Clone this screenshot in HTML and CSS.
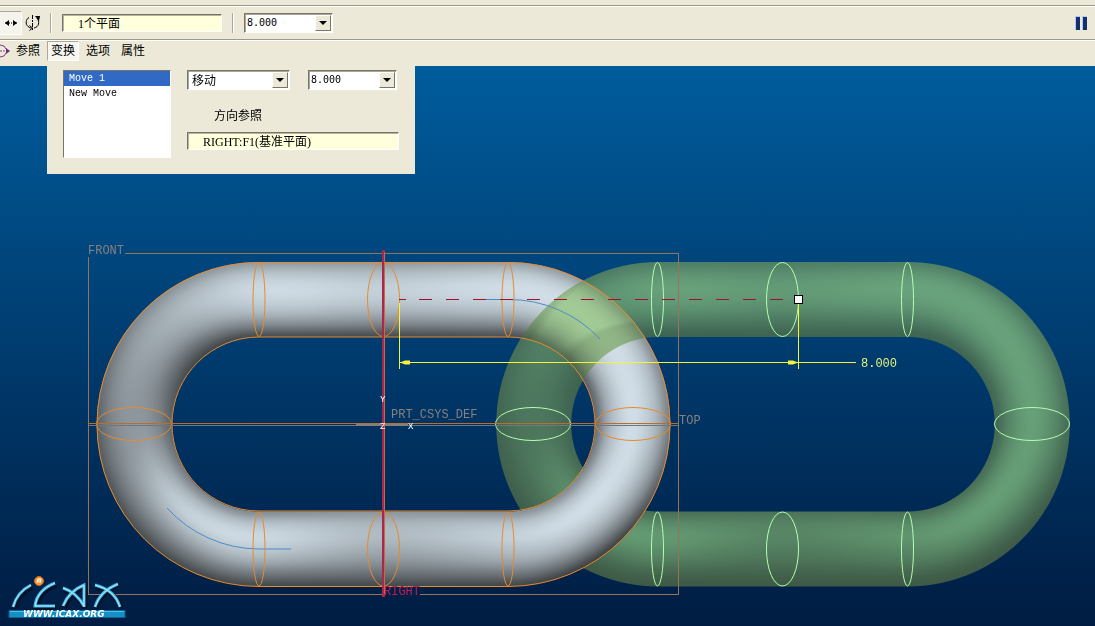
FILE: index.html
```html
<!DOCTYPE html>
<html lang="zh-CN">
<head>
<meta charset="utf-8">
<title>变换</title>
<link rel="stylesheet" href="styles.css">
</head>
<body>
<div class="strip"></div>
<header class="toolbar">
  <button class="tool tool-on" type="button" aria-label="移动">
    <svg width="14" height="8" viewBox="0 0 14 8"><path d="M1 4h12" stroke="#000" stroke-dasharray="5 1 1 1 5"/><path d="M1 4l4-3v6zM13 4l-4-3v6z"/></svg>
  </button>
  <button class="tool" type="button" aria-label="旋转">
    <svg width="16" height="18" viewBox="0 0 16 18" fill="none" stroke="#000"><path d="M7.500 1v16" stroke-dasharray="4 1 2 1"/><path d="M4 3.500C1 5 0 10 3 12.500q2 1.500 3 1.500M9 14c5-1 6-6 3-10"/><path d="M10 2h5l-1 5z" fill="#000" stroke="none"/><path d="M4.500 11.500l3 2.500-3 2.500"/></svg>
  </button>
  <span class="sep"></span>
  <input class="collector plane" type="text" value="1个平面" aria-label="平面">
  <span class="sep"></span>
  <span class="combo main-value">
    <select aria-label="距离"><option>8.000</option></select>
    <span class="drop"><svg width="8" height="4" viewBox="0 0 8 4"><path d="M0 0h8L4 4z"/></svg></span>
  </span>
  <button class="pause" type="button" aria-label="暂停">
    <svg width="14" height="14" viewBox="0 0 14 14"><path fill="#b9c6ef" d="M0 0h5v14H0zM7 0h5v14H7z"/><path fill="#122f70" d="M1 1h4v13H1zM8 1h4v13H8z"/></svg>
  </button>
</header>
<nav class="menubar">
  <svg class="ref-icon" width="10" height="14" viewBox="0 0 10 14" fill="none" stroke="#7a3a8c"><path d="M0 1q5 0 6 4M0 13q5 0 6-4"/><path d="M0 7h6" stroke-dasharray="2 1"/><path d="M6 4l4 3-4 3z" fill="#6a2a7c" stroke="none"/></svg>
  <button type="button">参照</button>
  <button type="button" class="open">变换</button>
  <button type="button">选项</button>
  <button type="button">属性</button>
</nav>
<main class="stage">
  <canvas class="layer" id="solid" width="1095" height="560"></canvas>
  <svg class="layer" viewBox="0 66 1095 560" fill="none">
    <g stroke="#4a8cc8">
      <path d="M486 299.500H508A125 125 0 0 1 600 339M167 508A125 125 0 0 0 259 549H291"/>
    </g>
    <g stroke="#e88a2c">
      <rect x="97" y="262.500" width="573" height="324" rx="162"/>
      <rect x="172" y="337" width="423" height="174" rx="87"/>
      <ellipse cx="259" cy="299.500" rx="6" ry="37"/><ellipse cx="383.500" cy="299.500" rx="16" ry="37"/><ellipse cx="508" cy="299.500" rx="6" ry="37"/>
      <ellipse cx="259" cy="549" rx="6" ry="37"/><ellipse cx="383.500" cy="549" rx="16" ry="37"/><ellipse cx="508" cy="549" rx="6" ry="37"/>
      <ellipse cx="134" cy="424" rx="37.500" ry="16.500"/><ellipse cx="633" cy="424" rx="37.500" ry="16.500"/>
    </g>
    <g stroke="#b4ffb0">
      <ellipse cx="657.500" cy="299.500" rx="6" ry="37"/><ellipse cx="782.500" cy="299.500" rx="16" ry="37"/><ellipse cx="907.500" cy="299.500" rx="6" ry="37"/>
      <ellipse cx="657.500" cy="549" rx="6" ry="37"/><ellipse cx="782.500" cy="549" rx="16" ry="37"/><ellipse cx="907.500" cy="549" rx="6" ry="37"/>
      <ellipse cx="533" cy="424" rx="37.500" ry="16.500"/><ellipse cx="1032" cy="424" rx="37.500" ry="16.500"/>
    </g>
    <g shape-rendering="crispEdges">
      <path stroke="#96745c" d="M125 253.500H678.500V594.500H420M384 594.500H88.500V257"/>
      <path stroke="#b0703c" d="M88 423.500H678"/><path stroke="#7d736a" d="M88 425.500H678"/>
      <path stroke="#8a7d74" stroke-width="2" d="M356 424.500H408"/>
      <path stroke="#a8284c" stroke-width="3" d="M383.500 250V597"/><path stroke="#c06a50" d="M384.500 252V594"/>
      <path stroke="#a01030" d="M399 299.500H406"/><path stroke="#a01030" stroke-dasharray="13 14" d="M419 299.500H796"/>
      <path stroke="#f4f43c" d="M399.500 303V369M798.500 303V369M400 362.500H856"/>
    </g>
    <path fill="#f4f43c" d="M400 362.500l5-2h5v4h-5zM798 362.500l-5-2h-5v4h5z"/>
    <rect x="794.500" y="295.500" width="8" height="8" fill="#fff" stroke="#000"/>
    <g class="label">
      <text class="datum" x="88" y="254">FRONT</text>
      <text class="datum" x="391" y="418">PRT_CSYS_DEF</text>
      <text class="datum" x="679" y="424">TOP</text>
      <text class="right-plane" x="384" y="595">RIGHT</text>
      <text class="dim" x="861" y="367">8.000</text>
      <text class="axis" x="380" y="402">Y</text><text class="axis" x="408" y="429">X</text><text class="axis" x="380" y="429">Z</text>
    </g>
    <g stroke="#041226" stroke-width="5"><path d="M14 609Q18 594 32 587M56 585Q38 592 36 608H56M64 608Q70 593 85 586V608M64 590Q77 594 85 608M96 608Q101 592 119 585M96 587Q116 592 121 608"/></g>
    <g stroke="#45b8e8" stroke-width="3"><path d="M13 607Q17 592 31 585M55 583Q37 590 35 606H55M63 606Q69 591 84 585V607M63 588Q76 592 84 606M95 607Q100 591 118 584M95 585Q115 590 120 607"/></g>
    <g stroke="#b5ecff"><path d="M13 607Q17 592 31 585M55 583Q37 590 35 606H55M63 606Q69 591 84 585V607M63 588Q76 592 84 606M95 607Q100 591 118 584M95 585Q115 590 120 607"/></g>
    <circle cx="39" cy="581" r="4.500" fill="#f09a35" stroke="#c86a20"/><path d="M37 583l1-4h3l-1 4M38 581h2" stroke="#fff"/>
    <rect x="9" y="610.500" width="116" height="7" fill="#1590c4" stroke="#0a5f94"/><path d="M10 611.500H124" stroke="#4cc4ec"/>
    <text class="site" x="23" y="617">WWW.ICAX.ORG</text>
  </svg>
  <section class="panel" aria-label="变换">
    <select class="moves" size="6" aria-label="移动列表"><option selected>Move 1</option><option>New Move</option></select>
    <div class="settings">
      <div class="pair">
        <span class="combo kind"><select aria-label="类型"><option>移动</option></select><span class="drop"><svg width="8" height="4" viewBox="0 0 8 4"><path d="M0 0h8L4 4z"/></svg></span></span>
        <span class="combo"><select aria-label="数值"><option>8.000</option></select><span class="drop"><svg width="8" height="4" viewBox="0 0 8 4"><path d="M0 0h8L4 4z"/></svg></span></span>
      </div>
      <label for="dir">方向参照</label>
      <input class="collector" id="dir" type="text" value="RIGHT:F1(基准平面)">
    </div>
  </section>
</main>
<script src="scene.js"></script>
</body>
</html>
```
FILE: styles.css
```css
* { box-sizing: border-box; }
body {
  margin: 0;
  background: #001f46;
  color: #000;
  font: 12px/14px "Liberation Serif", "Noto Sans CJK SC", serif;
}
button, input, select { font: inherit; color: inherit; margin: 0; border-radius: 0; }
svg { display: block; }
.strip { height: 6px; background: #ece9d8; border-bottom: 1px solid #9d9a8c; }
.toolbar {
  display: flex;
  align-items: center;
  height: 34px;
  background: #ece9d8;
  border-top: 1px solid #fff;
  border-bottom: 1px solid #9d9a8c;
}
.tool {
  display: grid;
  place-items: center;
  width: 22px;
  height: 24px;
  padding: 0;
  border: 0;
  background: none;
}
.tool-on {
  background: #f5f4ec;
  border-top: 1px solid #aca899;
  border-right: 1px solid #fff;
  border-bottom: 1px solid #fff;
}
.sep { width: 2px; height: 20px; margin: 0 10px 0 6px; border-left: 1px solid #aca899; border-right: 1px solid #fff; }
.plane + .sep { margin: 0 10px; }
.collector {
  height: 18px;
  padding: 0 15px;
  background: #ffffdc;
  border: 1px solid;
  border-color: #77746a #fff #fff #77746a;
  box-shadow: inset 1px 1px #b5b2a2;
}
.plane { width: 160px; }
.combo { display: grid; width: 89px; height: 20px; border: 1px solid; border-color: #77746a #fff #fff #77746a; background: #fff; box-shadow: inset 1px 1px #aca899; }
.combo select {
  grid-area: 1 / 1;
  appearance: none;
  padding: 0 0 0 2px;
  border: 0;
  background: none;
  font-family: "DejaVu Sans Mono", monospace;
  font-size: 10px;
}
.combo .drop {
  grid-area: 1 / 1;
  justify-self: end;
  display: grid;
  place-items: center;
  width: 16px;
  margin: 1px;
  background: #ece9d8;
  border: 1px solid;
  border-color: #fff #77746a #77746a #fff;
  pointer-events: none;
}
.pause { margin-left: auto; margin-right: 6px; padding: 0; border: 0; background: none; }
.menubar {
  display: flex;
  align-items: flex-start;
  height: 26px;
  padding-right: 8px;
  background: #ece9d8;
  border-top: 1px solid #fff;
}
.ref-icon { margin: 3px 2px 0 0; }
.menubar button { height: 20px; padding: 0 3px; margin-right: 3px; border: 1px solid transparent; background: none; }
.menubar .open { background: #f7f6f0; border-color: #aca899 #fff #fff #aca899; }
.stage { display: grid; position: relative; background: linear-gradient(#005c9c, #001c42); }
.layer { grid-area: 1 / 1; display: block; width: 100%; }
.panel {
  position: absolute;
  top: 0;
  left: 47px;
  display: flex;
  gap: 16px;
  padding: 4px 16px 16px;
  background: #ece9d8;
}
.moves {
  width: 108px;
  height: 88px;
  padding: 0;
  overflow: hidden;
  background: #fff;
  border: 1px solid;
  border-color: #77746a #fff #fff #77746a;
  font: 10px/14px "Liberation Mono", monospace;
}
.moves option { height: 15px; min-height: 15px; padding: 2px 5px 0; }
.moves option:checked { background: #316ac5 linear-gradient(#316ac5, #316ac5); color: #fff; }
.settings { display: flex; flex-direction: column; width: 212px; }
.pair { display: flex; gap: 18px; }
.kind { width: 103px; }
.kind select { padding-left: 4px; font-family: "Noto Sans CJK SC", sans-serif; font-size: 12px; }
.settings label { padding: 19px 27px 9px; }
.settings .collector { width: 100%; }
.label { font: 12px "Liberation Mono", monospace; }
.datum { fill: #88807c; }
.right-plane { fill: #c01c58; }
.dim { fill: #e4f47c; }
.axis { fill: #fff; font-size: 9px; }
.site { fill: #fff; font: italic bold 9px "DejaVu Sans", sans-serif; }
```
FILE: scene.js
```javascript
// Brightness across the tube (outer edge to inner edge) at twelve stations,
// clockwise from the start of the upper straight.
const shade = [
  [155, 196, 216, 210, 186, 138, 75],
  [155, 190, 208, 202, 176, 132, 75],
  [160, 202, 220, 213, 186, 138, 80],
  [150, 195, 218, 218, 200, 155, 90],
  [125, 175, 207, 221, 208, 172, 110],
  [68, 128, 178, 210, 221, 195, 140],
  [70, 118, 164, 192, 208, 192, 145],
  [72, 112, 148, 172, 186, 180, 150],
  [72, 120, 170, 202, 216, 194, 140],
  [78, 116, 154, 186, 204, 182, 132],
  [98, 128, 146, 151, 149, 132, 100],
  [140, 163, 173, 166, 146, 110, 72]
];
const R = 124.75, TUBE = 37.5, CY = 424.25, LEN = 249;

function spline(a, b, c, d, f) {
  return b + 0.5 * f * (c - a + f * (2 * a - 5 * b + 4 * c - d + f * (3 * (b - c) + d - a)));
}
function row(values, t) {
  const u = t * 6, i = Math.min(5, Math.floor(u));
  const at = k => values[Math.max(0, Math.min(6, k))];
  return spline(at(i - 1), at(i), at(i + 1), at(i + 2), u - i);
}
// Returns [coverage, brightness] of the link whose left bend is centred on x0.
function sample(x, y, x0) {
  const dx = x - x0, dy = y - CY;
  let r, s;
  if (dx < 0) {
    r = Math.hypot(dx, dy);
    s = 8 + Math.atan2(-dx, dy) / (Math.PI / 4);
  } else if (dx > LEN) {
    r = Math.hypot(dx - LEN, dy);
    s = 2 + Math.atan2(dx - LEN, -dy) / (Math.PI / 4);
  } else {
    r = Math.abs(dy);
    s = dy < 0 ? dx / LEN * 2 : 6 + (LEN - dx) / LEN * 2;
  }
  const cover = Math.max(0, Math.min(1, TUBE - Math.abs(r - R) + 0.5));
  if (!cover) return [0, 0];
  const t = Math.max(0, Math.min(1, (R + TUBE - r) / (2 * TUBE)));
  const i = Math.floor(s), at = k => row(shade[(k + 12) % 12], t);
  return [cover, spline(at(i - 1), at(i), at(i + 1), at(i + 2), s - i)];
}
const canvas = document.getElementById("solid");
const ctx = canvas.getContext("2d");
const img = ctx.createImageData(canvas.width, canvas.height);
const mix = (a, b, f) => a.map((v, i) => v + (b[i] - v) * f);
for (let py = 0; py < canvas.height; py++) {
  for (let px = 0; px < canvas.width; px++) {
    const x = px + 0.5, y = py + 66.5;
    const [wc, wv] = sample(x, y, 259), [gc, gv] = sample(x, y, 658.5);
    if (!wc && !gc) continue;
    const steel = [wv * 0.94, wv, wv * 1.04];
    const low = (y - 262) / 324;
    const lit = Math.pow(Math.max(0, (gv - 65) / 155), 1.7);
    const green = mix([62, 102 - 12 * low, 86 - 16 * low], [104 - 4 * low, 162 - 8 * low, 124 - 10 * low], lit);
    let c = green, a = gc;
    if (wc) {
      c = steel;
      a = Math.max(wc, gc);
      if (gc && y < CY) {
        const over = [wv * 0.56 + 38, wv * 0.66 + 56, wv * 0.46 + 48];
        const turn = Math.min(1, Math.max(0.9, gv / 160));
        c = mix(steel, over.map(v => v * turn), gc);
        c = mix(green, c, wc);
      } else if (gc) c = mix(green, steel, wc);
    }
    const o = (py * canvas.width + px) * 4;
    img.data[o] = c[0]; img.data[o + 1] = c[1]; img.data[o + 2] = c[2]; img.data[o + 3] = a * 255;
  }
}
ctx.putImageData(img, 0, 0);
```
